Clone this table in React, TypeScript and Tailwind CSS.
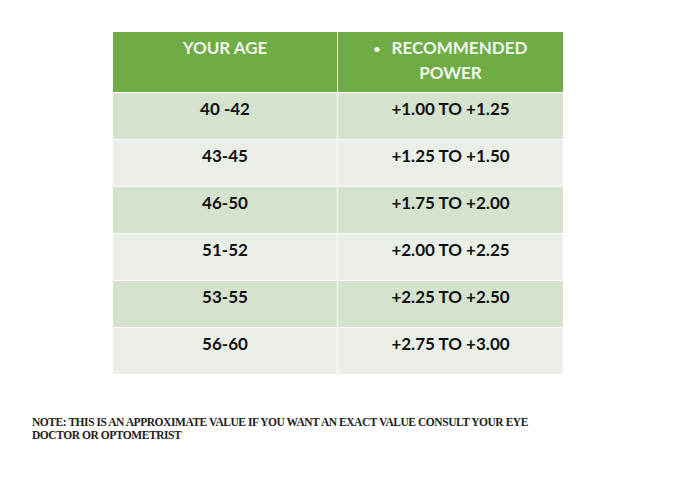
const rows = [
  ['40 -42', '+1.00 TO +1.25'],
  ['43-45', '+1.25 TO +1.50'],
  ['46-50', '+1.75 TO +2.00'],
  ['51-52', '+2.00 TO +2.25'],
  ['53-55', '+2.25 TO +2.50'],
  ['56-60', '+2.75 TO +3.00'],
]

export default function App() {
  return (
    <div className="w-[679px] h-[487px] bg-white relative overflow-hidden">
      <div className="pt-[32px] pl-[113px]">
        <div className="w-[450px] font-['Lato',sans-serif] font-bold text-[17px] text-[#111]">
          {/* header */}
          <div className="flex h-[60px] bg-[#6fac46] text-[#f2f6ee]">
            <div className="w-[225px] border-r border-[#e8f0e2] text-center pt-[4px] leading-[24px]">YOUR AGE</div>
            <div className="flex-1 text-center pt-[4px] leading-[24px]">
              <span className="text-[12px] mr-[11px] align-[1px]">•</span>RECOMMENDED<br />POWER
            </div>
          </div>
          {rows.map(([age, power], i) => (
            <div
              key={age}
              className={`flex h-[47px] border-t border-white ${i % 2 === 0 ? 'bg-[#d5e2ce]' : 'bg-[#eaefe8]'}`}
            >
              <div className="w-[225px] border-r border-white text-center pt-[4px] leading-[24px]">{age}</div>
              <div className="flex-1 text-center pt-[4px] leading-[24px]">{power}</div>
            </div>
          ))}
        </div>
      </div>
      <p className="mt-[42px] ml-[32px] w-[540px] font-['Liberation_Serif',serif] font-bold text-[11.5px] leading-[13px] tracking-[-0.45px] text-[#222]">
        NOTE: THIS IS AN APPROXIMATE VALUE IF YOU WANT AN EXACT VALUE CONSULT YOUR EYE DOCTOR OR OPTOMETRIST
      </p>
    </div>
  )
}
